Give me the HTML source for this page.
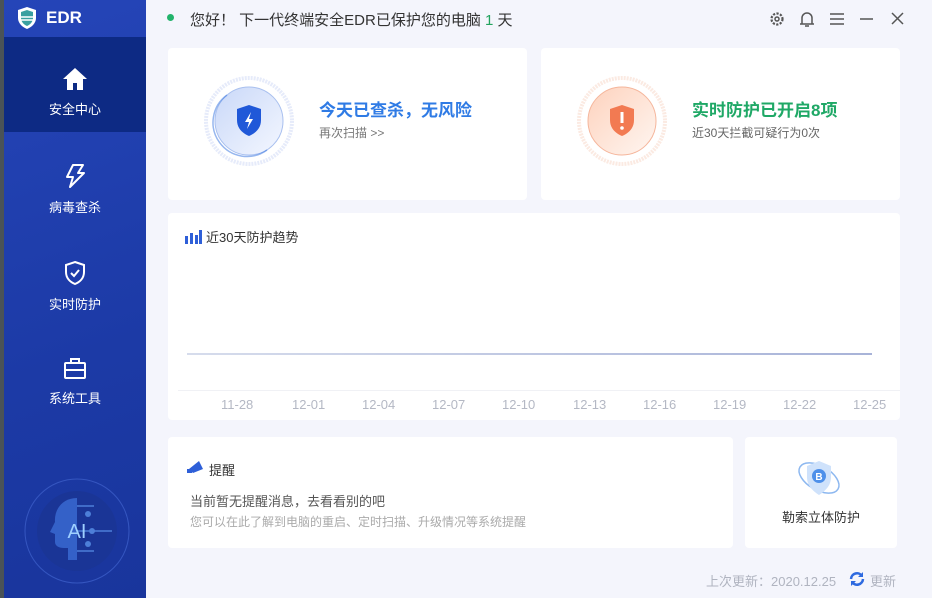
<!DOCTYPE html>
<html><head><meta charset="utf-8"><style>
*{margin:0;padding:0;box-sizing:border-box}
body{width:932px;height:598px;overflow:hidden;background:#f4f5fc;font-family:"Liberation Sans","Noto Sans CJK SC",sans-serif;position:relative;color:#333}
.strip{position:absolute;left:0;top:0;width:4px;height:598px;background:#4a5357}
.side{position:absolute;left:4px;top:0;width:142px;height:598px;background:linear-gradient(160deg,#2545b8,#1c3aa6 60%,#19359c)}
.logo{position:absolute;left:12px;top:6px;display:flex;align-items:center;color:#fff;font-weight:bold;font-size:17px}
.active{position:absolute;left:0;top:37px;width:142px;height:95px;background:#0d2a84}
.nav{position:absolute;left:0;width:142px;text-align:center;color:#fff;font-size:13px}
.nav svg{display:block;margin:0 auto 8px}
.card{position:absolute;background:#fff;border-radius:4px}
.t{position:absolute;white-space:nowrap}
</style></head><body>
<div class="strip"></div>
<div class="side">
 <div class="logo"><svg width="22" height="24" viewBox="0 0 22 24"><path d="M11 1L20 4V12C20 17 16 21 11 23C6 21 2 17 2 12V4Z" fill="#fff"/><path d="M11 4L17 6V12C17 15.5 14.5 18.5 11 20C7.5 18.5 5 15.5 5 12V6Z" fill="#3aa0a0"/><path d="M5 11H17M5 14H17" stroke="#fff" stroke-width="1.5"/></svg><span style="margin-left:8px">EDR</span></div>
 <div class="active"></div>
 <div class="nav" style="top:67px"><svg width="26" height="24" viewBox="0 0 26 24"><path d="M13 1L1 12H5V23H11V16H15V23H21V12H25Z" fill="#fff"/></svg>安全中心</div>
 <div class="nav" style="top:163px"><svg width="26" height="26" viewBox="0 0 26 26"><path d="M11 2H21L16 10H22L8 24L11 14H5Z" fill="none" stroke="#fff" stroke-width="2" stroke-linejoin="round"/></svg>病毒查杀</div>
 <div class="nav" style="top:260px"><svg width="24" height="26" viewBox="0 0 24 26"><path d="M12 2L21 5V12C21 18 17 22 12 24C7 22 3 18 3 12V5Z" fill="none" stroke="#fff" stroke-width="2"/><path d="M8 13L11 16L16 10" fill="none" stroke="#fff" stroke-width="2"/></svg>实时防护</div>
 <div class="nav" style="top:356px"><svg width="26" height="24" viewBox="0 0 26 24"><rect x="3" y="7" width="20" height="15" rx="1" fill="none" stroke="#fff" stroke-width="2"/><path d="M9 7V3H17V7M3 14H23" fill="none" stroke="#fff" stroke-width="2"/></svg>系统工具</div>
 <svg style="position:absolute;left:18px;top:476px" width="110" height="110" viewBox="0 0 110 110"><circle cx="55" cy="55" r="52" fill="none" stroke="#3556c0" stroke-width="1"/><circle cx="55" cy="55" r="40" fill="#1a3596"/><path d="M55 22C40 22 32 34 33 46L28 56L33 58V66C33 70 37 72 42 72H46V84H55Z" fill="#3461c8"/><path d="M55 30H72M55 55H90M55 75H72" stroke="#4d7fd8" stroke-width="1.5"/><circle cx="66" cy="38" r="3" fill="#4d7fd8"/><circle cx="70" cy="55" r="3" fill="#4d7fd8"/><circle cx="66" cy="68" r="3" fill="#4d7fd8"/><text x="55" y="62" text-anchor="middle" fill="#9fd0ff" font-size="20" font-family="Liberation Sans">AI</text></svg>
</div>

<div class="t" style="left:167px;top:14px;width:7px;height:7px;border-radius:50%;background:#22b36b"></div>
<div class="t" style="left:190px;top:9px;font-size:15px;color:#333">您好！ 下一代终端安全EDR已保护您的电脑 <span style="color:#22a35e">1</span> 天</div>
<svg class="t" style="left:768px;top:10px" width="140" height="18" viewBox="0 0 140 18"><g fill="none" stroke="#555" stroke-width="1.5"><circle cx="9" cy="9" r="5.5" stroke-width="2.2" stroke-dasharray="2.2 1.4"/><circle cx="9" cy="9" r="2"/><path d="M34 14V8A5 5 0 0 1 44 8V14H32H46M37 16H41"/><path d="M62 4H76M62 9H76M62 14H76"/><path d="M92 9H105"/><path d="M124 3L135 14M135 3L124 14"/></g></svg>

<div class="card" style="left:168px;top:48px;width:359px;height:152px">
 <svg class="t" style="left:35px;top:27px" width="92" height="92" viewBox="0 0 92 92"><defs><linearGradient id="gb" x1="0" y1="0" x2="1" y2="1"><stop offset="0" stop-color="#c9d8f8"/><stop offset="1" stop-color="#f4f7ff"/></linearGradient><linearGradient id="go" x1="0" y1="0" x2="1" y2="1"><stop offset="0" stop-color="#fdd2bd"/><stop offset="1" stop-color="#fff6f1"/></linearGradient></defs><circle cx="46" cy="46" r="43" fill="none" stroke="#e6ebfa" stroke-width="4" stroke-dasharray="2 1"/><circle cx="46" cy="46" r="34" fill="url(#gb)" stroke="#a9c0ef" stroke-width="1"/><path d="M24 20A34 34 0 0 0 64 75" fill="none" stroke="#2f6fe0" stroke-width="1.5" opacity=".5"/><path d="M46 30L58 34V45C58 53 53 58 46 61C39 58 34 53 34 45V34Z" fill="#2058d8"/><path d="M48 37L42 47H46L44 54L50 44H46Z" fill="#fff"/></svg>
 <div class="t" style="left:151px;top:48px;font-size:17px;color:#2f7be5;font-weight:bold">今天已查杀，无风险</div>
 <div class="t" style="left:151px;top:76px;font-size:12px;color:#777">再次扫描 &gt;&gt;</div>
</div>
<div class="card" style="left:541px;top:48px;width:359px;height:152px">
 <svg class="t" style="left:35px;top:27px" width="92" height="92" viewBox="0 0 92 92"><circle cx="46" cy="46" r="43" fill="none" stroke="#fbeae2" stroke-width="4" stroke-dasharray="2 1"/><circle cx="46" cy="46" r="34" fill="url(#go)" stroke="#f5b69c" stroke-width="1"/><path d="M46 30L58 34V45C58 53 53 58 46 61C39 58 34 53 34 45V34Z" fill="#f27a52"/><path d="M46 37V48" stroke="#fff" stroke-width="3"/><circle cx="46" cy="53" r="1.8" fill="#fff"/></svg>
 <div class="t" style="left:151px;top:48px;font-size:17px;color:#1fa866;font-weight:bold">实时防护已开启8项</div>
 <div class="t" style="left:151px;top:76px;font-size:12px;color:#666">近30天拦截可疑行为0次</div>
</div>

<div class="card" style="left:168px;top:213px;width:732px;height:207px">
 <svg class="t" style="left:17px;top:17px" width="17" height="14"><rect x="0" y="6" width="3" height="8" fill="#2e5fd8"/><rect x="5" y="3" width="3" height="11" fill="#2e5fd8"/><rect x="10" y="5" width="3" height="9" fill="#2e5fd8"/><rect x="14" y="0" width="3" height="14" fill="#2e5fd8"/></svg>
 <div class="t" style="left:38px;top:14px;font-size:13px;color:#333">近30天防护趋势</div>
 <div class="t" style="left:19px;top:140px;width:685px;height:2px;background:linear-gradient(90deg,#d6dcec,#a8b3d8)"></div>
 <div class="t" style="left:10px;top:177px;width:722px;height:1px;background:#f0f1f5"></div>
 <div class="t" style="left:0;top:184px;width:732px;font-size:13px;color:#b4b8c4">
  <span class="t" style="left:53px">11-28</span><span class="t" style="left:124px">12-01</span><span class="t" style="left:194px">12-04</span><span class="t" style="left:264px">12-07</span><span class="t" style="left:334px">12-10</span><span class="t" style="left:405px">12-13</span><span class="t" style="left:475px">12-16</span><span class="t" style="left:545px">12-19</span><span class="t" style="left:615px">12-22</span><span class="t" style="left:685px">12-25</span>
 </div>
</div>

<div class="card" style="left:168px;top:437px;width:565px;height:111px">
 <svg class="t" style="left:19px;top:22px" width="18" height="15" viewBox="0 0 18 15"><path d="M2 10L12 2L16 10L6 14Z" fill="#2e5fd8"/><rect x="0" y="10" width="5" height="4" fill="#2e5fd8"/></svg>
 <div class="t" style="left:41px;top:23px;font-size:13px;color:#333">提醒</div>
 <div class="t" style="left:22px;top:54px;font-size:13px;color:#555">当前暂无提醒消息，去看看别的吧</div>
 <div class="t" style="left:22px;top:76px;font-size:12px;color:#aaa">您可以在此了解到电脑的重启、定时扫描、升级情况等系统提醒</div>
</div>
<div class="card" style="left:745px;top:437px;width:152px;height:111px">
 <svg class="t" style="left:50px;top:18px" width="48" height="46" viewBox="0 0 48 46"><ellipse cx="24" cy="23" rx="22" ry="12" fill="none" stroke="#8db8f0" stroke-width="1.5" transform="rotate(30 24 23)"/><path d="M24 6L36 11V22C36 31 30 36 24 40C18 36 12 31 12 22V11Z" fill="#cfe2fb"/><circle cx="24" cy="21" r="7" fill="#4e90ea"/><text x="24" y="25" text-anchor="middle" fill="#fff" font-size="10" font-weight="bold">B</text></svg>
 <div class="t" style="left:0;width:152px;text-align:center;top:70px;font-size:13px;color:#333">勒索立体防护</div>
</div>

<div class="t" style="left:706px;top:571px;font-size:13px;color:#b0b4c0">上次更新：2020.12.25</div>
<svg class="t" style="left:849px;top:571px" width="16" height="16" viewBox="0 0 16 16"><path d="M2 8A6 6 0 0 1 13 5M14 8A6 6 0 0 1 3 11" fill="none" stroke="#2e6ae0" stroke-width="2.5"/><path d="M14 1V6H9Z M2 15V10H7Z" fill="#2e6ae0"/></svg>
<div class="t" style="left:870px;top:571px;font-size:13px;color:#b0b4c0">更新</div>
</body></html>
